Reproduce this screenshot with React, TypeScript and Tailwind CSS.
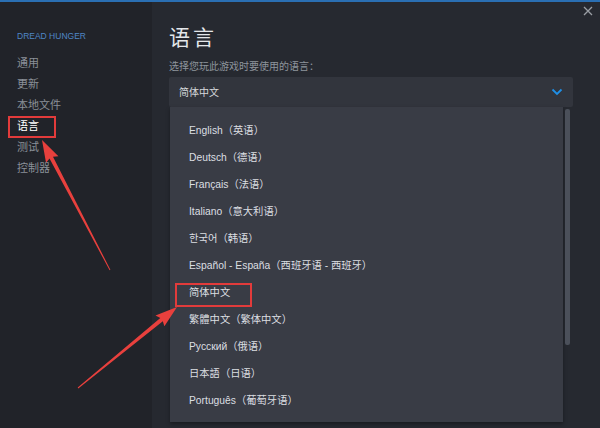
import React from "react";

const cjk = { fontFamily: '"Liberation Sans", "Noto Sans CJK SC", sans-serif' };

const navItems = ["通用", "更新", "本地文件", "语言", "测试", "控制器"];

const languages = [
  "English（英语）",
  "Deutsch（德语）",
  "Français（法语）",
  "Italiano（意大利语）",
  "한국어（韩语）",
  "Español - España（西班牙语 - 西班牙）",
  "简体中文",
  "繁體中文（繁体中文）",
  "Русский（俄语）",
  "日本語（日语）",
  "Português（葡萄牙语）",
];

// tapering annotation arrow, tail -> tip
function arrowPoints(tx: number, ty: number, hx: number, hy: number) {
  const dx = hx - tx;
  const dy = hy - ty;
  const len = Math.hypot(dx, dy);
  const ux = dx / len;
  const uy = dy / len;
  const nx = -uy;
  const ny = ux;
  const headLen = 20;
  const headW = 7;
  const shaftW = 2;
  const bx = hx - ux * headLen;
  const by = hy - uy * headLen;
  const pts = [
    [tx + nx * 0.5, ty + ny * 0.5],
    [bx + nx * shaftW, by + ny * shaftW],
    [bx + nx * headW - ux * 2, by + ny * headW - uy * 2],
    [hx, hy],
    [bx - nx * headW - ux * 2, by - ny * headW - uy * 2],
    [bx - nx * shaftW, by - ny * shaftW],
    [tx - nx * 0.5, ty - ny * 0.5],
  ];
  return pts.map((p) => p.map((v) => v.toFixed(1)).join(",")).join(" ");
}

function Sidebar() {
  return (
    <aside className="w-[152px] shrink-0 bg-[#212329] pt-[28px] pl-[17px]">
      <div className="text-[8.5px] leading-[12px] text-[#4f86c6] mb-[10.5px]" style={cjk}>
        DREAD HUNGER
      </div>
      <ul className="flex flex-col">
        {navItems.map((item) => (
          <li
            key={item}
            className={`h-[21.2px] text-[11px] leading-[21px] ${item === "语言" ? "text-white" : "text-[#8a9098]"}`}
            style={cjk}
          >
            {item}
          </li>
        ))}
      </ul>
    </aside>
  );
}

function LanguagePanel() {
  return (
    <main className="relative flex-1 bg-[#262930] pl-[17px] pr-[27px] pt-[23px]">
      <button className="absolute right-[7px] top-[4px] text-[#9a9ea4]">
        <svg width="10" height="10" viewBox="0 0 10 10">
          <path d="M1 1 L9 9 M9 1 L1 9" stroke="currentColor" strokeWidth="1.3" />
        </svg>
      </button>
      <h1 className="text-[21px] leading-[26px] tracking-[3px] text-[#e4e7ea]" style={cjk}>
        语言
      </h1>
      <p className="mt-[9px] text-[10px] leading-[14px] text-[#8e959d]" style={cjk}>
        选择您玩此游戏时要使用的语言：
      </p>
      <div className="mt-[3px] flex h-[30px] items-center justify-between rounded-[2px] bg-[#32353d] pl-[10px] pr-[10px]">
        <span className="text-[10px] text-[#d6d9dc]" style={cjk}>简体中文</span>
        <svg width="12" height="8" viewBox="0 0 12 8">
          <path d="M1.5 1.5 L6 6 L10.5 1.5" fill="none" stroke="#1f8fe6" strokeWidth="1.8" />
        </svg>
      </div>
      <div className="flex h-[315px] pl-px">
        <ul className="w-[393px] bg-[#393c45] pt-[10px] shadow-[0_2px_4px_rgba(0,0,0,0.35)]">
          {languages.map((lang) => (
            <li key={lang} className="h-[27px] pl-[19px] text-[10.3px] leading-[27px] text-[#dcdfe2]" style={cjk}>
              {lang}
            </li>
          ))}
        </ul>
        <div className="ml-[2px] w-[5px] pt-[2px]">
          <div className="h-[236px] w-[5px] rounded-[2px] bg-[#4b505a]" />
        </div>
      </div>
    </main>
  );
}

export default function App() {
  return (
    <div className="relative flex h-[428px] w-[600px] flex-col overflow-hidden bg-[#262930]">
      <div className="h-[2px] bg-[#2a6fb3]" />
      <div className="flex flex-1">
        <Sidebar />
        <LanguagePanel />
      </div>
      {/* red annotation marks */}
      <svg className="pointer-events-none absolute left-0 top-0" width="600" height="428">
        <rect x="9" y="117" width="46" height="20" fill="none" stroke="#e23b3b" strokeWidth="2" />
        <rect x="176" y="284" width="75" height="22" fill="none" stroke="#e23b3b" strokeWidth="2" />
        <polygon points={arrowPoints(110, 270, 42, 140)} fill="#e8403d" />
        <polygon points={arrowPoints(78, 388, 177, 307)} fill="#e8403d" />
      </svg>
    </div>
  );
}
